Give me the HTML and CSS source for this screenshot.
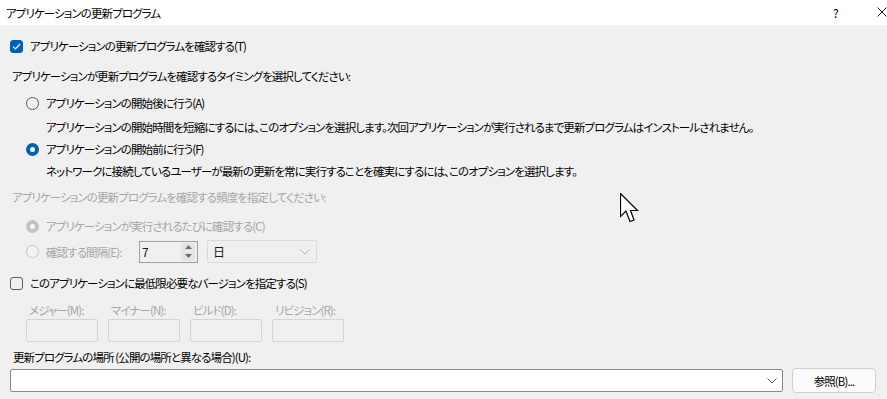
FILE: index.html
```html
<!DOCTYPE html>
<html>
  <head>
    <meta charset="utf-8">
    <title>アプリケーションの更新プログラム</title>
    <link rel="stylesheet" href="styles.css">
  </head>
  <body>
    <div class="titlebar">
      <div class="title">アプリケーションの更新プログラム</div>
      <div class="help">?</div>
      <div class="close">
        <svg width="10" height="10" viewBox="0 0 10 10"><path d="M0.5 0.5 L9.5 9.5 M9.5 0.5 L0.5 9.5" stroke="#1a1a1a" stroke-width="1" fill="none"/></svg>
      </div>
    </div>

    <div class="dialog">
      <div class="row row_check_t">
        <span class="checkbox checked">
          <svg width="9" height="7" viewBox="0 0 9 7"><path d="M1 3.6 L3.4 6 L8 1" stroke="#fff" stroke-width="1.2" fill="none"/></svg>
        </span>
        <span class="label">アプリケーションの更新プログラムを確認する(T)</span>
      </div>

      <div class="row heading row_timing">アプリケーションが更新プログラムを確認するタイミングを選択してください:</div>

      <div class="row indent row_after">
        <span class="radio"></span>
        <span class="label">アプリケーションの開始後に行う(A)</span>
      </div>
      <div class="row desc row_desc_a">アプリケーションの開始時間を短縮にするには、このオプションを選択します。次回アプリケーションが実行されるまで更新プログラムはインストールされません。</div>

      <div class="row indent row_before">
        <span class="radio checked"></span>
        <span class="label">アプリケーションの開始前に行う(F)</span>
      </div>
      <div class="row desc row_desc_f">ネットワークに接続しているユーザーが最新の更新を常に実行することを確実にするには、このオプションを選択します。</div>

      <div class="row heading disabled row_freq">アプリケーションの更新プログラムを確認する頻度を指定してください:</div>

      <div class="row indent disabled row_each">
        <span class="radio checked dim"></span>
        <span class="label">アプリケーションが実行されるたびに確認する(C)</span>
      </div>

      <div class="row indent disabled row_interval">
        <span class="radio dim"></span>
        <span class="label interval_label">確認する間隔(E):</span>
        <div class="spin">
          <span class="spin_value">7</span>
          <span class="spin_buttons">
            <span class="spin_btn"><svg width="7" height="4" viewBox="0 0 7 4"><path d="M0 4 L3.5 0 L7 4 Z" fill="#6e6e6e"/></svg></span>
            <span class="spin_btn"><svg width="7" height="4" viewBox="0 0 7 4"><path d="M0 0 L3.5 4 L7 0 Z" fill="#6e6e6e"/></svg></span>
          </span>
        </div>
        <div class="select">
          <span class="select_value">日</span>
          <svg width="10" height="6" viewBox="0 0 10 6"><path d="M0.5 0.5 L5 5 L9.5 0.5" stroke="#b8b8b8" fill="none"/></svg>
        </div>
      </div>

      <div class="row row_check_s">
        <span class="checkbox"></span>
        <span class="label">このアプリケーションに最低限必要なバージョンを指定する(S)</span>
      </div>

      <div class="versions">
        <div class="version_field">
          <div class="version_label">メジャー(M):</div>
          <div class="version_input"></div>
        </div>
        <div class="version_field">
          <div class="version_label">マイナー(N):</div>
          <div class="version_input"></div>
        </div>
        <div class="version_field">
          <div class="version_label">ビルド(D):</div>
          <div class="version_input"></div>
        </div>
        <div class="version_field">
          <div class="version_label">リビジョン(R):</div>
          <div class="version_input"></div>
        </div>
      </div>

      <div class="row location_label">更新プログラムの場所 (公開の場所と異なる場合)(U):</div>

      <div class="location_row">
        <div class="combo">
          <svg width="10" height="6" viewBox="0 0 10 6"><path d="M0.5 0.5 L5 5 L9.5 0.5" stroke="#5f5f5f" fill="none"/></svg>
        </div>
        <div class="browse">参照(B)...</div>
      </div>
    </div>

    <svg class="cursor" width="20" height="31" viewBox="0 0 20 31">
      <path d="M0.5 0.5 L0.5 23.5 L6 18 L10 28.5 L14 27 L10.5 17.5 L17.5 17.5 Z" fill="#fff" stroke="#000" stroke-width="1.2" stroke-linejoin="miter"/>
    </svg>
  </body>
</html>
```

FILE: styles.css
```css
body {
  margin: 0;
  width: 887px;
  height: 399px;
  overflow: hidden;
  background: #f0f0f0;
  font-family: "Noto Sans CJK JP", sans-serif;
  font-size: 11.5px;
  letter-spacing: -0.9px;
  font-feature-settings: "palt";
  color: #000;
  position: relative;
}

.titlebar {
  height: 25px;
  background: #fff;
  display: flex;
  align-items: center;
}

.title {
  padding-left: 6px;
  flex: 1;
}

.help {
  width: 44px;
  font-size: 12px;
}

.close {
  width: 10px;
  display: flex;
  align-items: center;
  margin-top: -2px;
}

.dialog {
  display: flex;
  flex-direction: column;
}

.row {
  height: 20px;
  display: flex;
  align-items: center;
  white-space: nowrap;
}

.label {
  margin-left: 7px;
}

.row_check_t { margin-top: 11px; padding-left: 10px; }
.heading { padding-left: 12px; }
.row_timing { margin-top: 10px; }
.indent { padding-left: 26px; }
.row_after { margin-top: 7px; }
.desc { padding-left: 46px; }
.row_desc_a { margin-top: 4px; }
.row_before { margin-top: 2px; }
.row_desc_f { margin-top: 2px; }
.row_freq { margin-top: 6px; }
.row_each { margin-top: 9px; }
.row_interval { margin-top: 4px; height: 23px; }
.row_check_s { margin-top: 10px; padding-left: 10px; }

.disabled {
  color: #a6a6a6;
}

.checkbox {
  width: 11px;
  height: 11px;
  border: 1px solid #5d5d5d;
  border-radius: 3px;
  display: flex;
  align-items: center;
  justify-content: center;
  flex: none;
}

.checkbox.checked {
  background: #005fb8;
  border-color: #005fb8;
}

.radio {
  width: 11px;
  height: 11px;
  border: 1px solid #5d5d5d;
  border-radius: 50%;
  flex: none;
  box-sizing: content-box;
}

.radio.checked {
  width: 5px;
  height: 5px;
  border: 4px solid #005fb8;
  background: #fff;
}

.radio.dim {
  border-color: #c4c4c4;
  background: #f4f4f4;
}

.radio.checked.dim {
  border-color: #c2c2c2;
  background: #f8f8f8;
}

.interval_label {
  width: 93px;
}

.spin {
  width: 57px;
  height: 20px;
  border: 1px solid #a0a0a0;
  display: flex;
  align-items: stretch;
}

.spin_value {
  flex: 1;
  padding-left: 2px;
  line-height: 20px;
  color: #1a1a1a;
  font-size: 12px;
}

.spin_buttons {
  width: 14px;
  margin: 1px 2px 1px 0;
  display: flex;
  flex-direction: column;
  gap: 1px;
}

.spin_btn {
  flex: 1;
  background: #e4e4e4;
  display: flex;
  align-items: center;
  justify-content: center;
}

.select {
  width: 110px;
  height: 23px;
  margin-left: 9px;
  border: 1px solid #dadada;
  border-radius: 2px;
  display: flex;
  align-items: center;
  justify-content: space-between;
  padding: 0 6px 0 5px;
  box-sizing: border-box;
}

.select_value {
  color: #1a1a1a;
  font-size: 12px;
}

.versions {
  display: flex;
  gap: 10px;
  padding-left: 26px;
  margin-top: 8px;
}

.version_field {
  display: flex;
  flex-direction: column;
}

.version_label {
  height: 18px;
  line-height: 18px;
  padding-left: 3px;
  color: #a6a6a6;
}

.version_input {
  width: 70px;
  height: 21px;
  border: 1px solid #d4d4d4;
  border-radius: 2px;
}

.location_label {
  margin-top: 5px;
  padding-left: 13px;
}

.location_row {
  display: flex;
  align-items: center;
  padding-left: 10px;
  margin-top: 1px;
  height: 25px;
}

.combo {
  width: 766px;
  height: 21px;
  background: #fff;
  border: 1px solid #8a8a8a;
  border-radius: 2px;
  display: flex;
  align-items: center;
  justify-content: flex-end;
  padding-right: 5px;
  margin-right: 9px;
}

.browse {
  width: 82px;
  height: 23px;
  background: #fbfbfb;
  border: 1px solid #d0d0d0;
  border-radius: 4px;
  display: flex;
  align-items: center;
  justify-content: center;
}

.cursor {
  position: absolute;
  left: 620px;
  top: 193px;
}
```
